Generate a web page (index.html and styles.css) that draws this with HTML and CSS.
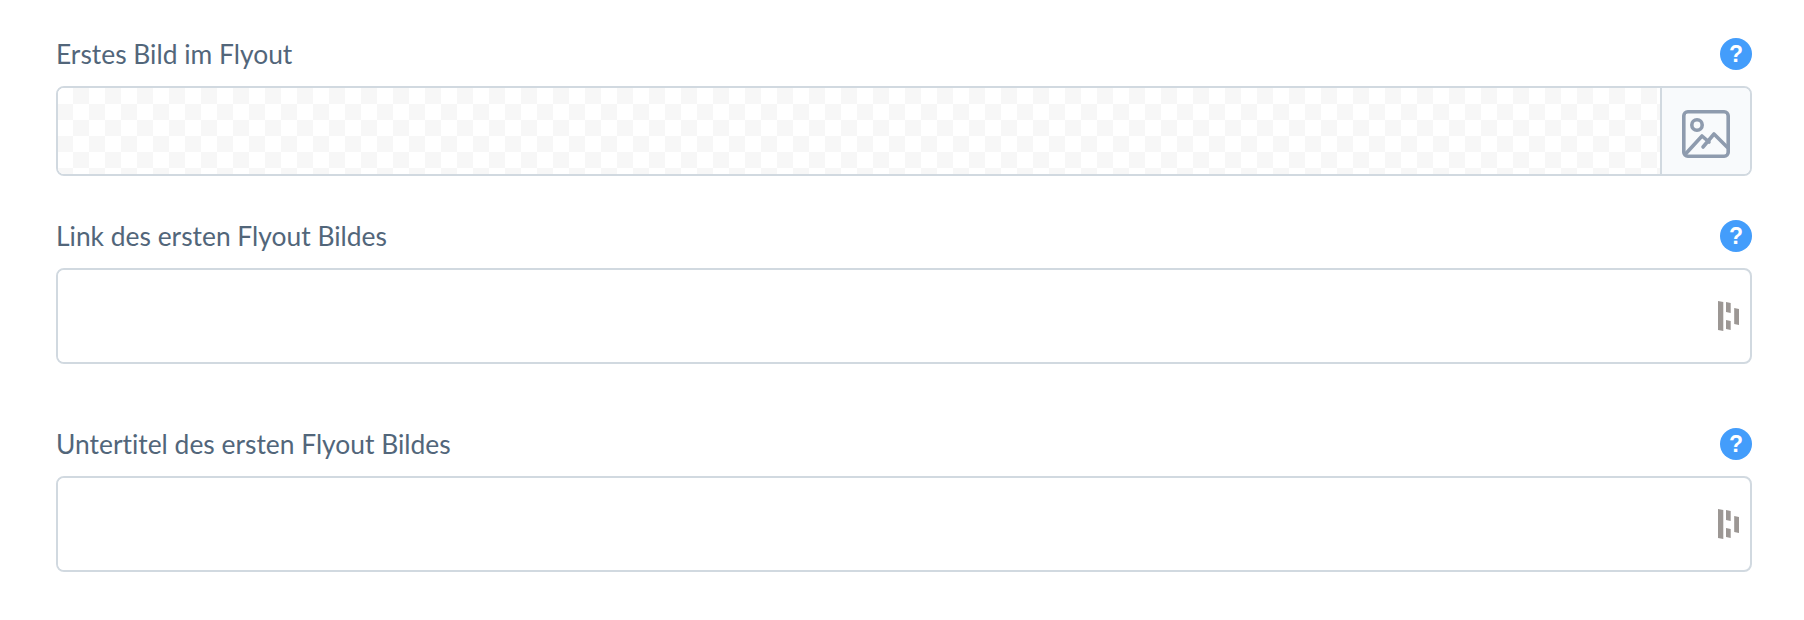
FILE: index.html

```html
<!DOCTYPE html>
<html lang="de">
<head>
  <meta charset="UTF-8">
  <title>Flyout Einstellungen</title>
  <link rel="stylesheet" href="styles.css">
</head>
<body>
  <div class="form">
    <div class="field field-image">
      <div class="field-head">
        <label>Erstes Bild im Flyout</label>
        <span class="help">?</span>
      </div>
      <div class="control control-image">
        <div class="preview"></div>
        <button class="addon">
          <svg width="48" height="48" viewBox="0 0 48 48" fill="none" stroke="#8e9bae" stroke-width="3.6" stroke-linecap="round" stroke-linejoin="round">
            <rect x="1.8" y="1.8" width="44.4" height="44.4" rx="4"/>
            <circle cx="15" cy="15" r="5.2"/>
            <path d="M3.5 44 L20 26 L27 32"/>
            <path d="M21 37 L32 24 L45 37"/>
          </svg>
        </button>
      </div>
    </div>

    <div class="field field-link">
      <div class="field-head">
        <label>Link des ersten Flyout Bildes</label>
        <span class="help">?</span>
      </div>
      <div class="control control-text">
        <input type="text">
        <svg class="pw-icon" width="21" height="30" viewBox="0 0 21 30" fill="#9c9794">
          <polygon points="0,0 5.3,1 5.3,30 0,29"/>
          <polygon points="8,1 12.7,2 12.7,12 8,11"/>
          <polygon points="8,19 12.7,20 12.7,29 8,28"/>
          <polygon points="16.2,7 21,8 21,24 16.2,23"/>
        </svg>
      </div>
    </div>

    <div class="field">
      <div class="field-head">
        <label>Untertitel des ersten Flyout Bildes</label>
        <span class="help">?</span>
      </div>
      <div class="control control-text">
        <input type="text">
        <svg class="pw-icon" width="21" height="30" viewBox="0 0 21 30" fill="#9c9794">
          <polygon points="0,0 5.3,1 5.3,30 0,29"/>
          <polygon points="8,1 12.7,2 12.7,12 8,11"/>
          <polygon points="8,19 12.7,20 12.7,29 8,28"/>
          <polygon points="16.2,7 21,8 21,24 16.2,23"/>
        </svg>
      </div>
    </div>
  </div>
</body>
</html>
```

FILE: styles.css

```css
body {
  margin: 0;
  background: white;
  font-family: Lato, "Noto Sans", sans-serif;
}
.form {
  padding: 38px 52px 0 56px;
}
.field-image {
  margin-bottom: 44px;
}
.field-link {
  margin-bottom: 64px;
}
.field-head {
  display: flex;
  justify-content: space-between;
  align-items: center;
  height: 32px;
  margin-bottom: 16px;
}
label {
  font-size: 26.4px;
  font-variant-ligatures: none;
  color: #52667a;
}
.help {
  width: 32px;
  height: 32px;
  border-radius: 50%;
  background: #439dfb;
  color: white;
  font-family: "Liberation Sans", sans-serif;
  font-weight: bold;
  font-size: 23px;
  line-height: 32px;
  text-align: center;
}
.control {
  display: flex;
  box-sizing: border-box;
  border: 2px solid #d1d9e0;
  border-radius: 8px;
  overflow: hidden;
}
.control-image {
  height: 90px;
}
.control-text {
  height: 96px;
  align-items: center;
}
.preview {
  flex: 1;
  background-color: white;
  background-image: conic-gradient(#f7f7f7 25%, white 0 50%, #f7f7f7 0 75%, white 0);
  background-size: 32px 32px;
  background-position: -1px 0;
}
.addon {
  width: 90px;
  padding: 6px 0 0;
  border: 0;
  border-left: 2px solid #d1d9e0;
  background: #f8fafc;
  display: flex;
  align-items: center;
  justify-content: center;
}
input {
  flex: 1;
  height: 100%;
  border: 0;
  outline: 0;
  padding: 0 16px;
  background: white;
}
.pw-icon {
  margin-right: 11px;
}
```
